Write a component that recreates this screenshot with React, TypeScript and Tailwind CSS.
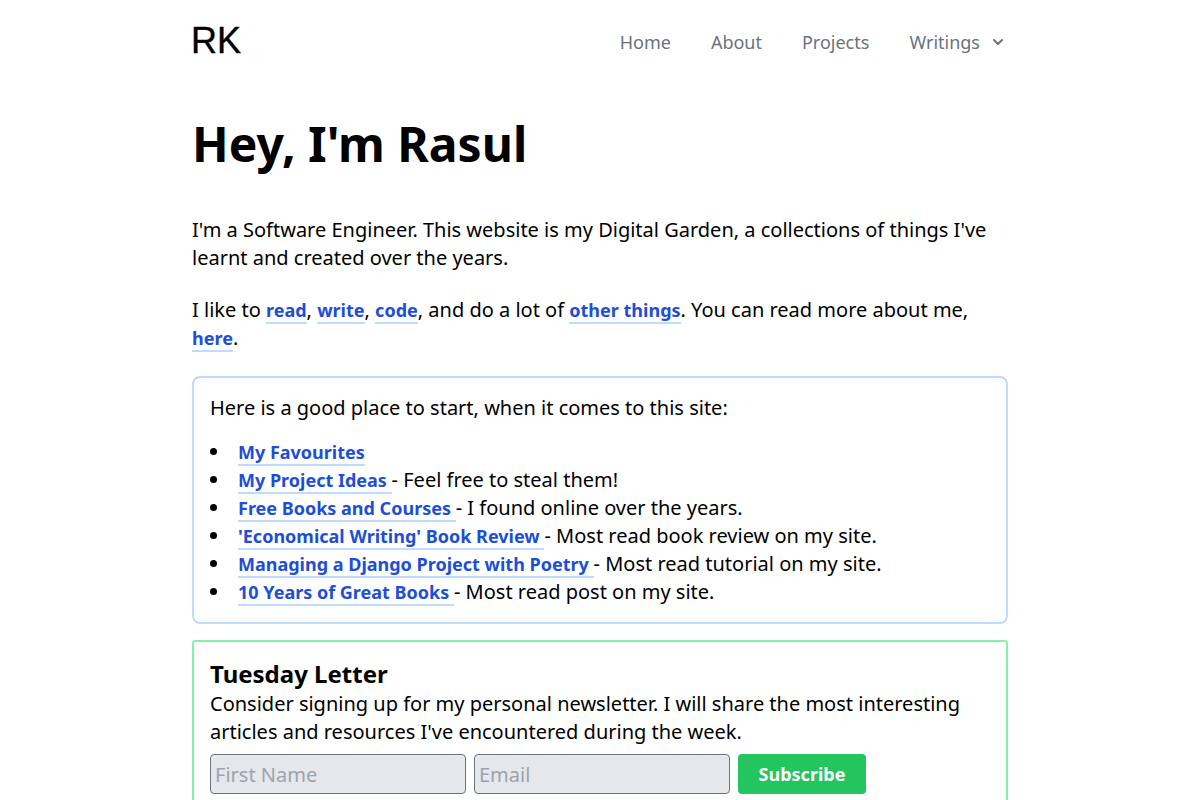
import type { ReactNode } from "react";

const navLinks = ["Home", "About", "Projects"];

const startLinks = [
  { title: "My Favourites", note: "" },
  { title: "My Project Ideas", note: "- Feel free to steal them!" },
  { title: "Free Books and Courses", note: "- I found online over the years." },
  { title: "'Economical Writing' Book Review", note: "- Most read book review on my site." },
  { title: "Managing a Django Project with Poetry", note: "- Most read tutorial on my site." },
  { title: "10 Years of Great Books", note: "- Most read post on my site." },
];

function TextLink({ children }: { children: ReactNode }) {
  return (
    <a
      href="#"
      className="text-lg leading-7 font-bold text-[#1d4ed8] border-b-2 border-[#bfdbfe] hover:border-[#1d4ed8]"
    >
      {children}
    </a>
  );
}

function Header() {
  return (
    <header className="flex items-end justify-between pt-6">
      <a href="#">
        <svg width="48" height="32" viewBox="0 0 48 32" className="overflow-visible font-['Liberation_Sans',sans-serif]">
          <text x="-1" y="29" fontSize="36" fill="#000" stroke="#000" strokeWidth="0.4">RK</text>
        </svg>
      </a>
      <nav className="flex items-center gap-10 text-lg text-[#6b7280]">
        {navLinks.map((label) => (
          <a key={label} href="#" className="hover:text-gray-900">{label}</a>
        ))}
        <button type="button" className="flex items-center gap-2 hover:text-gray-900">
          Writings
          <svg className="w-5 h-5" viewBox="0 0 20 20" fill="currentColor" aria-hidden="true">
            <path
              fillRule="evenodd"
              clipRule="evenodd"
              d="M5.293 7.293a1 1 0 011.414 0L10 10.586l3.293-3.293a1 1 0 111.414 1.414l-4 4a1 1 0 01-1.414 0l-4-4a1 1 0 010-1.414z"
            />
          </svg>
        </button>
      </nav>
    </header>
  );
}

export default function App() {
  return (
    <div className="max-w-4xl mx-auto px-10 pb-10 bg-white text-black font-['Noto_Sans',sans-serif]">
      <Header />

      <main className="text-xl leading-7">
        <h1 className="mt-16 mb-12 text-5xl leading-none font-bold">Hey, I'm Rasul</h1>

        <p className="mb-6">
          I'm a Software Engineer. This website is my Digital Garden, a collections of things I've
          learnt and created over the years.
        </p>
        <p className="mb-6">
          I like to <TextLink>read</TextLink>, <TextLink>write</TextLink>, <TextLink>code</TextLink>, and
          do a lot of <TextLink>other things</TextLink>. You can read more about me,{" "}
          <TextLink>here</TextLink>.
        </p>

        <section className="p-4 mb-4 border-2 border-[#bfdbfe] rounded-lg">
          <p className="mb-4">Here is a good place to start, when it comes to this site:</p>
          <ul className="pl-[21px] list-disc">
            {startLinks.map(({ title, note }) => (
              <li key={title} className="pl-[7px]">
                <TextLink>{title}{note && " "}</TextLink>{note}
              </li>
            ))}
          </ul>
        </section>

        <section className="p-4 border-2 border-[#86efac] rounded">
          <h2 className="text-2xl font-bold">Tuesday Letter</h2>
          <p className="mb-2">
            Consider signing up for my personal newsletter. I will share the most interesting articles
            and resources I've encountered during the week.
          </p>
          <form className="flex flex-wrap gap-2" onSubmit={(e) => e.preventDefault()}>
            <input
              type="text"
              aria-label="First Name"
              placeholder="First Name"
              className="w-64 h-10 px-1 bg-[#e5e7eb] border border-[#6b7280] rounded placeholder:text-[#9ca3af]"
            />
            <input
              type="email"
              aria-label="Email"
              placeholder="Email"
              className="w-64 h-10 px-1 bg-[#e5e7eb] border border-[#6b7280] rounded placeholder:text-[#9ca3af]"
            />
            <button type="submit" className="w-32 h-10 text-lg font-bold text-white bg-[#22c55e] rounded hover:bg-[#16a34a]">
              Subscribe
            </button>
          </form>
        </section>
      </main>
    </div>
  );
}
